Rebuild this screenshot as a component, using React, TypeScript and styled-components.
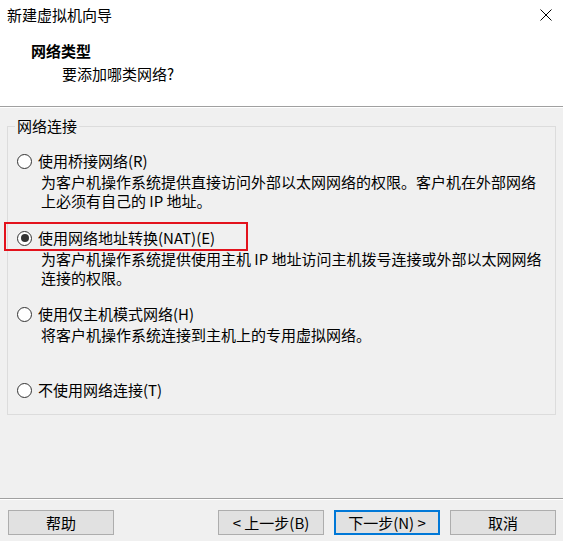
import { createGlobalStyle, styled } from "styled-components";

const GlobalStyle = createGlobalStyle`
  html, body {
    margin: 0;
    padding: 0;
    background: #f0f0f0;
  }
  body {
    font-family: "Noto Sans CJK SC", "Noto Sans", sans-serif;
    font-size: 15px;
    color: #000;
  }
`;

interface NetworkOption {
  id: string;
  label: string;
  lines: string[];
}

const options: NetworkOption[] = [
  {
    id: "bridged",
    label: "使用桥接网络(R)",
    lines: [
      "为客户机操作系统提供直接访问外部以太网网络的权限。客户机在外部网络",
      "上必须有自己的 IP 地址。",
    ],
  },
  {
    id: "nat",
    label: "使用网络地址转换(NAT)(E)",
    lines: [
      "为客户机操作系统提供使用主机 IP 地址访问主机拨号连接或外部以太网网络",
      "连接的权限。",
    ],
  },
  {
    id: "host",
    label: "使用仅主机模式网络(H)",
    lines: ["将客户机操作系统连接到主机上的专用虚拟网络。"],
  },
  {
    id: "none",
    label: "不使用网络连接(T)",
    lines: [],
  },
];

const selected = "nat";

const CloseIcon = () => (
  <svg width="12" height="12" viewBox="0 0 12 12">
    <path d="M0.5 0.5 L11.5 11.5 M11.5 0.5 L0.5 11.5" stroke="#000" strokeWidth="1" fill="none" />
  </svg>
);

const App = () => {
  return (
    <>
      <GlobalStyle />
      <Window>
        <Top>
          <TitleBar>
            <span>新建虚拟机向导</span>
            <CloseButton>
              <CloseIcon />
            </CloseButton>
          </TitleBar>
          <Header>
            <HeaderTitle>网络类型</HeaderTitle>
            <HeaderSub>要添加哪类网络?</HeaderSub>
          </Header>
        </Top>

        <Content>
          <GroupBox>
            <Legend>网络连接</Legend>
            <OptionList>
              {options.map((opt) => (
                <Option key={opt.id}>
                  <OptionRow>
                    {opt.id === selected && <Highlight />}
                    <Radio $checked={opt.id === selected} />
                    <OptionLabel>{opt.label}</OptionLabel>
                  </OptionRow>
                  {opt.lines.length > 0 && (
                    <Description>
                      {opt.lines.map((line) => (
                        <div key={line}>{line}</div>
                      ))}
                    </Description>
                  )}
                </Option>
              ))}
            </OptionList>
          </GroupBox>
        </Content>

        <Footer>
          <Button>帮助</Button>
          <ButtonGroup>
            <Button>&lt; 上一步(B)</Button>
            <Button $default>下一步(N) &gt;</Button>
            <Button>取消</Button>
          </ButtonGroup>
        </Footer>
      </Window>
    </>
  );
};
export default App;

const Window = styled.div`
  width: 563px;
  height: 541px;
  display: flex;
  flex-direction: column;
  background: #f0f0f0;
  overflow: hidden;
`;

const Top = styled.div`
  background: #fff;
  border-bottom: 1px solid #a0a0a0;
  box-shadow: 0 1px 0 #fff;
`;

const TitleBar = styled.div`
  height: 30px;
  display: flex;
  align-items: center;
  justify-content: space-between;
  padding: 0 11px 0 7px;
  line-height: 30px;
`;

const CloseButton = styled.div`
  display: flex;
  align-items: center;
  height: 12px;
`;

const Header = styled.div`
  height: 76px;
  box-sizing: border-box;
  padding-top: 11px;
`;

const HeaderTitle = styled.div`
  font-weight: 700;
  line-height: 20px;
  padding-left: 31px;
`;

const HeaderSub = styled.div`
  line-height: 20px;
  margin-top: 3px;
  padding-left: 62px;
`;

const Content = styled.div`
  flex: 1;
  padding: 9px 7px 0 7px;
`;

const GroupBox = styled.fieldset`
  margin: 0;
  padding: 15px 0 14px 0;
  border: 1px solid #dcdcdc;
  min-width: 0;
`;

const Legend = styled.legend`
  margin-left: 7px;
  padding: 0 2px;
  line-height: 20px;
`;

const OptionList = styled.div`
  display: flex;
  flex-direction: column;
`;

const Option = styled.div`
  min-height: 76px;

  &:first-child {
    min-height: 77px;
  }

  &:last-child {
    min-height: 0;
  }
`;

const OptionRow = styled.div`
  position: relative;
  display: flex;
  align-items: center;
  height: 20px;
  padding-left: 9px;
`;

const Highlight = styled.div`
  position: absolute;
  left: -4px;
  top: -6px;
  width: 244px;
  height: 29px;
  box-sizing: border-box;
  border: 2px solid #e3121c;
  pointer-events: none;
`;

const Radio = styled.span<{ $checked?: boolean }>`
  width: 15px;
  height: 15px;
  box-sizing: border-box;
  border: 1px solid #333;
  border-radius: 50%;
  background: #fff;
  display: flex;
  align-items: center;
  justify-content: center;

  &::after {
    content: "";
    display: ${(p) => (p.$checked ? "block" : "none")};
    width: 8px;
    height: 8px;
    border-radius: 50%;
    background: #333;
  }
`;

const OptionLabel = styled.span`
  margin-left: 6px;
  line-height: 20px;
  white-space: nowrap;
`;

const Description = styled.div`
  margin-top: 1px;
  padding-left: 33px;
  line-height: 19px;
  white-space: nowrap;
`;

const Footer = styled.div`
  display: flex;
  justify-content: space-between;
  align-items: flex-start;
  border-top: 1px solid #a0a0a0;
  box-shadow: inset 0 1px 0 #fff;
  padding: 11px 7px 6px 8px;
`;

const ButtonGroup = styled.div`
  display: flex;
  gap: 10px;
`;

const Button = styled.button<{ $default?: boolean }>`
  width: 106px;
  height: 25px;
  box-sizing: border-box;
  padding: 0;
  margin: 0;
  background: #e1e1e1;
  border: ${(p) => (p.$default ? "2px solid #0078d7" : "1px solid #adadad")};
  font-family: inherit;
  font-size: 15px;
  line-height: 20px;
  color: #000;
`;
